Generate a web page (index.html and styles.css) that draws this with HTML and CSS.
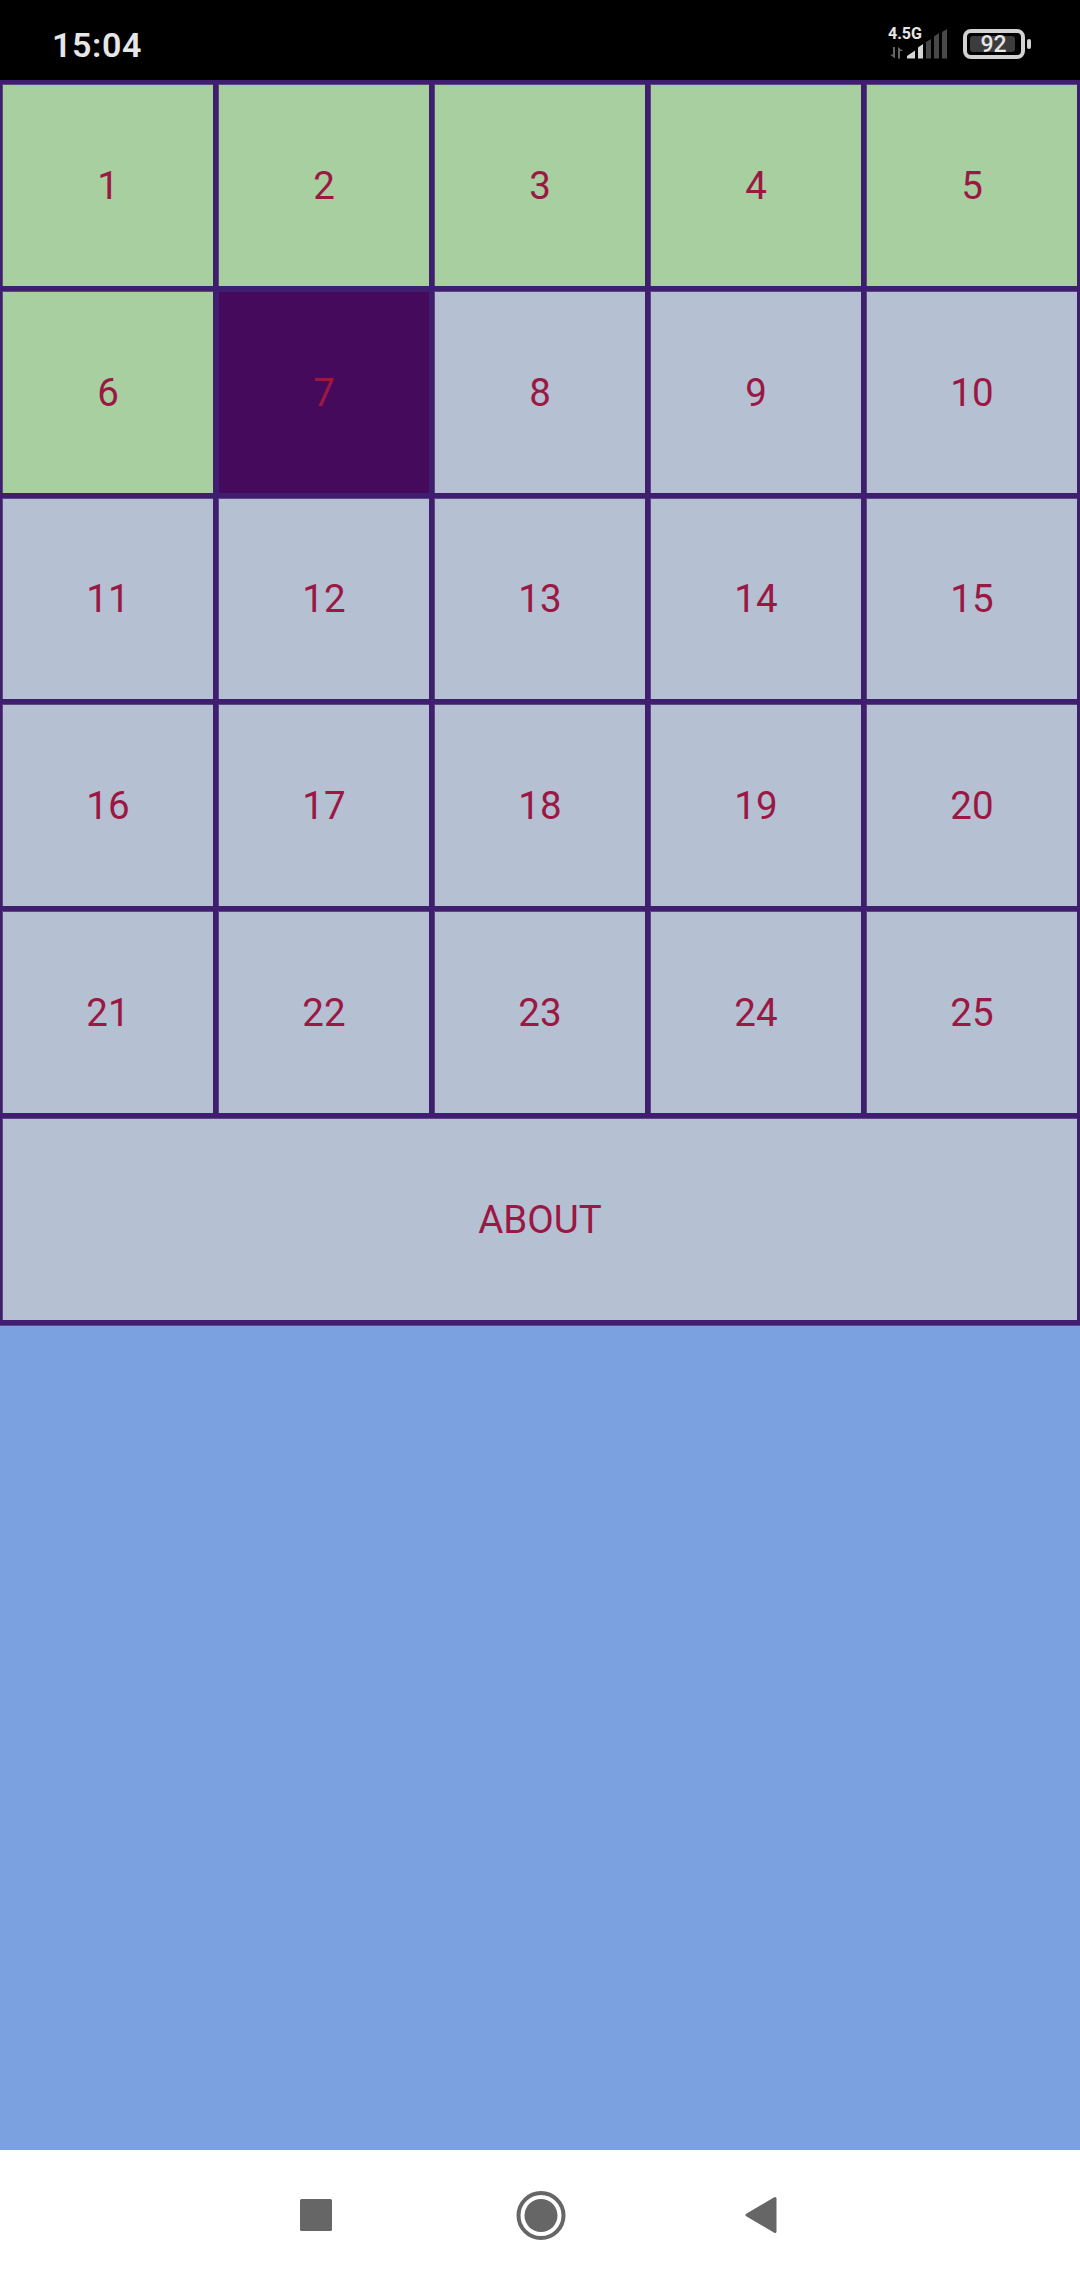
FILE: index.html
```html
<!DOCTYPE html>
<html lang="en">
<head>
<meta charset="utf-8">
<title>Levels</title>
<link rel="stylesheet" href="styles.css">
</head>
<body>
<div class="screen">
  <header class="status">
    <span class="time">15:04</span>
    <div class="indicators">
      <div class="network">
        <span class="network-type">4.5G</span>
        <svg class="signal" width="60" height="30" viewBox="0 0 60 30">
          <path fill="#666" d="M3 18h2v11.500L0 25.500h3zM8 18l5 4h-3v7.500H8z"/>
          <path fill="#d6d6d6" d="M17 29.500v-2.500l8-5.500v8zM28 29.500V18.500l5-3.500v14.500z"/>
          <path fill="#484848" d="M36 29.500V13l5-3v19.500zM44 29.500V7.500l5-3.500v25.500zM52 29.500V3l5-3v29.500z"/>
        </svg>
      </div>
      <div class="battery"><div class="battery-level">92</div></div>
      <div class="battery-tip"></div>
    </div>
  </header>
  <main class="levels">
    <div class="cell done">1</div><div class="cell done">2</div><div class="cell done">3</div><div class="cell done">4</div><div class="cell done">5</div>
    <div class="cell done">6</div><div class="cell current">7</div><div class="cell">8</div><div class="cell">9</div><div class="cell">10</div>
    <div class="cell">11</div><div class="cell">12</div><div class="cell">13</div><div class="cell">14</div><div class="cell">15</div>
    <div class="cell">16</div><div class="cell">17</div><div class="cell">18</div><div class="cell">19</div><div class="cell">20</div>
    <div class="cell">21</div><div class="cell">22</div><div class="cell">23</div><div class="cell">24</div><div class="cell">25</div>
    <div class="cell about">ABOUT</div>
  </main>
  <nav class="nav">
    <svg width="32" height="32" viewBox="0 0 32 32"><rect width="32" height="32" rx="1.500" fill="#666"/></svg>
    <svg width="54" height="50" viewBox="0 0 54 50"><circle cx="29" cy="25.500" r="22.500" fill="none" stroke="#666" stroke-width="4"/><circle cx="29" cy="25.500" r="16.500" fill="#666"/></svg>
    <svg width="32" height="38" viewBox="0 0 32 38"><path d="M2 19 30 2.500v33z" fill="#666" stroke="#666" stroke-width="3" stroke-linejoin="round"/></svg>
  </nav>
</div>
</body>
</html>
```
FILE: styles.css
```css
body {
  margin: 0;
  font-family: Roboto, sans-serif;
}

.screen {
  display: flex;
  flex-direction: column;
  width: 1080px;
  height: 2280px;
  background: #7ba1e1;
}

.status {
  display: flex;
  justify-content: space-between;
  box-sizing: border-box;
  height: 80px;
  padding: 0 49px 0 52px;
  background: #000;
  color: #e6e6e6;
}

.time {
  padding-top: 25px;
  font-size: 34px;
  line-height: 40px;
  font-weight: 600;
  letter-spacing: 0.6px;
}

.indicators {
  display: flex;
}

.network {
  width: 75px;
}

.network-type {
  display: block;
  height: 28.500px;
  font-size: 16px;
  line-height: 67px;
  font-weight: 700;
}

.signal {
  display: block;
  margin-left: 2px;
}

.battery {
  box-sizing: border-box;
  width: 62px;
  height: 30px;
  margin-top: 29px;
  padding: 3px;
  border: 4px solid #d2d2d2;
  border-radius: 8px;
}

.battery-level {
  width: 45px;
  height: 16px;
  border-radius: 3px;
  background: #3c3c3c;
  font-size: 23px;
  line-height: 18px;
  font-weight: 500;
  text-align: center;
  text-indent: 2px;
}

.battery-tip {
  width: 4px;
  height: 10px;
  margin: 39px 0 0 2px;
  border-radius: 2px;
  background: #d2d2d2;
}

.levels {
  display: grid;
  grid-template-columns: repeat(5, 211px);
  grid-template-rows: repeat(6, 201.800px);
  gap: 5px;
  padding: 4px 2px 5px;
  background: #3f1d6f;
  border-bottom: 1px solid #4f4b99;
}

.cell {
  display: flex;
  align-items: center;
  justify-content: center;
  border: 1px solid #5c4784;
  border-width: 1px 0 0 1px;
  background: #b5c1d2;
  color: #9a1843;
  font-size: 38.500px;
  line-height: 45px;
}

.done {
  background: #a8cf9f;
}

.current {
  border-color: #3f2070;
  background: #450a5c;
}

.about {
  grid-column: 1 / -1;
}

.nav {
  display: flex;
  align-items: center;
  box-sizing: border-box;
  height: 130px;
  margin-top: auto;
  padding: 0 303px 0 300px;
  justify-content: space-between;
  background: #fff;
}
```
